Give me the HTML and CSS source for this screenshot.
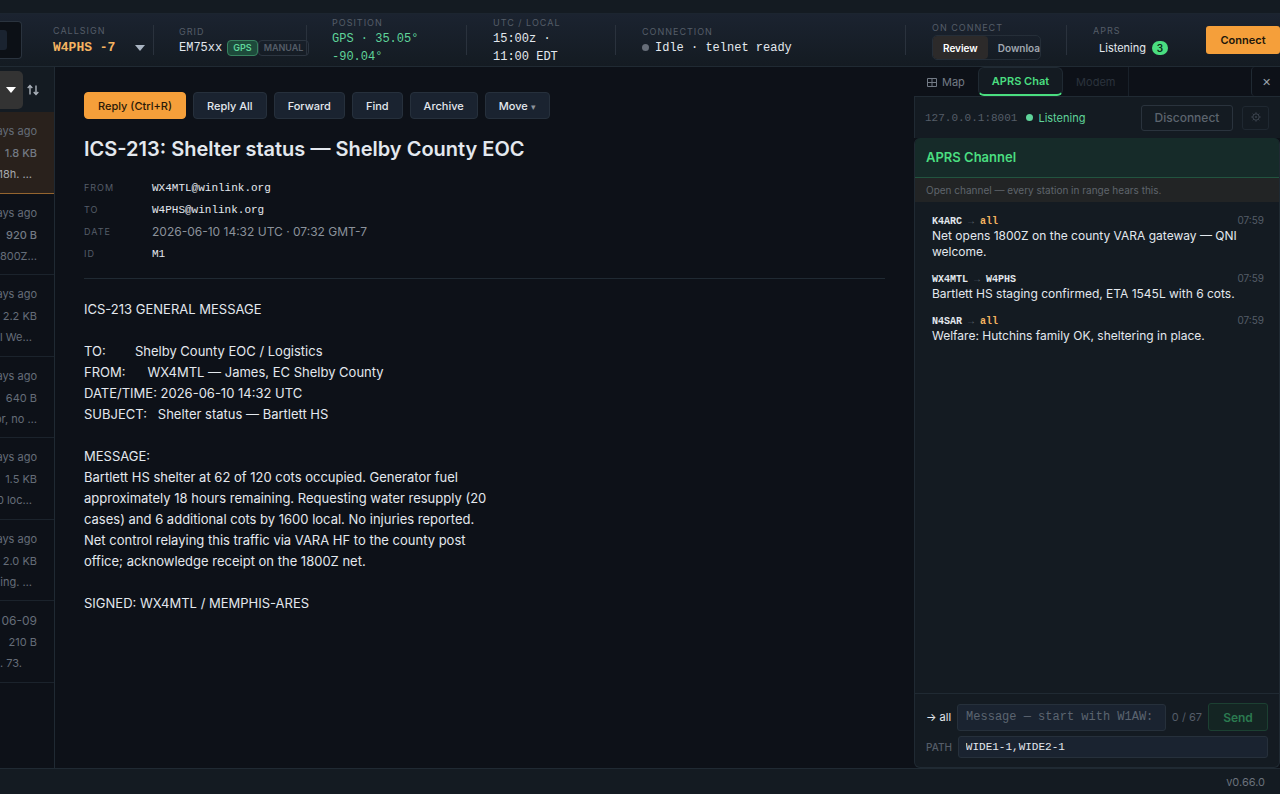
FILE: index.html
```html
<!DOCTYPE html>
<html lang="en">
<head>
    <meta charset="UTF-8">
    <meta name="viewport" content="width=device-width, initial-scale=1.0">
    <title>Winlink Mail</title>
    <link rel="stylesheet" href="styles.css">
</head>
<body>
    <div class="titlebar"></div>

    <!-- Ribbon -->
    <header class="ribbon">
        <div class="search-stub"><span class="search-key"></span></div>
        <div class="cell cell-call">
            <span class="label">CALLSIGN</span>
            <button class="callsign" type="button">W4PHS -7 <span class="caret"></span></button>
        </div>
        <div class="cell cell-grid">
            <span class="label">GRID</span>
            <div class="value grid-value">EM75xx
                <span class="source">
                    <button class="pill pill-on" type="button">GPS</button><button class="pill" type="button">MANUAL</button>
                </span>
            </div>
        </div>
        <div class="cell cell-pos">
            <span class="label">POSITION</span>
            <span class="value green">GPS · 35.05°<br>-90.04°</span>
        </div>
        <div class="cell cell-time">
            <span class="label">UTC / LOCAL</span>
            <span class="value">15:00z ·<br>11:00 EDT</span>
        </div>
        <div class="cell cell-conn">
            <span class="label">CONNECTION</span>
            <span class="value status"><span class="dot dot-idle"></span>Idle · telnet ready</span>
        </div>
        <div class="cell cell-onconnect">
            <span class="label">ON CONNECT</span>
            <div class="segment">
                <button class="seg seg-on" type="button">Review</button>
                <button class="seg" type="button">Download</button>
            </div>
        </div>
        <div class="cell cell-aprs">
            <span class="label">APRS</span>
            <span class="aprs-state">Listening <span class="badge">3</span></span>
        </div>
        <button class="connect" type="button">Connect</button>
    </header>

    <main class="workspace">
        <!-- Message list -->
        <aside class="list">
            <div class="list-tools">
                <button class="filter" type="button" aria-label="Filter"><span class="caret caret-light"></span></button>
                <button class="sort" type="button" aria-label="Sort">
                    <svg width="12" height="12" viewBox="0 0 12 12" fill="none" stroke="currentColor" stroke-width="1.4">
                        <path d="M3 10.5V1.5M.7 4 3 1.5 5.3 4M9 1.5v9M6.7 8 9 10.5 11.3 8"/>
                    </svg>
                </button>
            </div>
            <article class="row row-selected">
                <span class="age">days ago</span>
                <span class="size unread">1.8 KB</span>
                <span class="preview">18h. …</span>
            </article>
            <article class="row">
                <span class="age">days ago</span>
                <span class="size unread">920 B</span>
                <span class="preview preview-full">800Z…</span>
            </article>
            <article class="row">
                <span class="age">days ago</span>
                <span class="size">2.2 KB</span>
                <span class="preview">l We…</span>
            </article>
            <article class="row">
                <span class="age">days ago</span>
                <span class="size">640 B</span>
                <span class="preview preview-full">or, no …</span>
            </article>
            <article class="row">
                <span class="age">days ago</span>
                <span class="size">1.5 KB</span>
                <span class="preview">0 loc…</span>
            </article>
            <article class="row">
                <span class="age">days ago</span>
                <span class="size">2.0 KB</span>
                <span class="preview">ing. …</span>
            </article>
            <article class="row">
                <span class="age age-date">06-09</span>
                <span class="size">210 B</span>
                <span class="preview preview-short">. 73.</span>
            </article>
        </aside>

        <!-- Reading pane -->
        <section class="reader">
            <div class="actions">
                <button class="action action-main" type="button">Reply (Ctrl+R)</button>
                <button class="action" type="button">Reply All</button>
                <button class="action" type="button">Forward</button>
                <button class="action" type="button">Find</button>
                <button class="action" type="button">Archive</button>
                <button class="action" type="button">Move <span class="tiny">▾</span></button>
            </div>
            <h1>ICS-213: Shelter status — Shelby County EOC</h1>
            <dl class="meta">
                <dt>FROM</dt><dd>WX4MTL@winlink.org</dd>
                <dt>TO</dt><dd>W4PHS@winlink.org</dd>
                <dt>DATE</dt><dd class="date">2026-06-10 14:32 UTC · 07:32 GMT-7</dd>
                <dt>ID</dt><dd>M1</dd>
            </dl>
            <div class="message">ICS-213 GENERAL MESSAGE

TO:        Shelby County EOC / Logistics
FROM:      WX4MTL — James, EC Shelby County
DATE/TIME: 2026-06-10 14:32 UTC
SUBJECT:   Shelter status — Bartlett HS

MESSAGE:
Bartlett HS shelter at 62 of 120 cots occupied. Generator fuel
approximately 18 hours remaining. Requesting water resupply (20
cases) and 6 additional cots by 1600 local. No injuries reported.
Net control relaying this traffic via VARA HF to the county post
office; acknowledge receipt on the 1800Z net.

SIGNED: WX4MTL / MEMPHIS-ARES</div>
        </section>

        <!-- APRS dock -->
        <aside class="dock">
            <nav class="tabs">
                <button class="tab" type="button">
                    <svg width="10" height="10" viewBox="0 0 10 10" fill="none" stroke="currentColor">
                        <path d="M.5 1.5h9v8h-9zM5 1.5v8M.5 5.5h9"/>
                    </svg>
                    Map
                </button>
                <button class="tab tab-on" type="button">APRS Chat</button>
                <button class="tab tab-off" type="button">Modem</button>
                <button class="close" type="button" aria-label="Close">✕</button>
            </nav>
            <div class="link-bar">
                <span class="host">127.0.0.1:8001</span>
                <span class="link-state"><span class="dot dot-live"></span>Listening</span>
                <button class="disconnect" type="button">Disconnect</button>
                <button class="gear" type="button" aria-label="Settings">
                    <svg width="10" height="10" viewBox="0 0 10 10" fill="none" stroke="currentColor">
                        <circle cx="5" cy="5" r="3.2"/>
                        <circle cx="5" cy="5" r=".6"/>
                        <path d="M5 .3v1.5M5 8.2v1.5M.3 5h1.5M8.2 5h1.5M1.7 1.7l1 1M7.3 7.3l1 1M8.3 1.7l-1 1M2.7 7.3l-1 1"/>
                    </svg>
                </button>
            </div>
            <div class="chat">
                <h2>APRS Channel</h2>
                <p class="notice">Open channel — every station in range hears this.</p>
                <div class="feed">
                    <div class="post">
                        <div class="post-head"><b>K4ARC</b> <i>→</i> <b class="all">all</b><time>07:59</time></div>
                        <p>Net opens 1800Z on the county VARA gateway — QNI welcome.</p>
                    </div>
                    <div class="post">
                        <div class="post-head"><b>WX4MTL</b> <i>→</i> <b>W4PHS</b><time>07:59</time></div>
                        <p>Bartlett HS staging confirmed, ETA 1545L with 6 cots.</p>
                    </div>
                    <div class="post">
                        <div class="post-head"><b>N4SAR</b> <i>→</i> <b class="all">all</b><time>07:59</time></div>
                        <p>Welfare: Hutchins family OK, sheltering in place.</p>
                    </div>
                </div>
                <form class="composer">
                    <div class="compose-row">
                        <label for="msg">→ all</label>
                        <input id="msg" class="field field-msg" type="text" placeholder="Message — start with W1AW:">
                        <span class="count">0 / 67</span>
                        <button class="send" type="button">Send</button>
                    </div>
                    <div class="compose-row">
                        <label for="path" class="path-label">PATH</label>
                        <input id="path" class="field" type="text" value="WIDE1-1,WIDE2-1">
                    </div>
                </form>
            </div>
        </aside>
    </main>

    <footer class="statusbar">v0.66.0</footer>
</body>
</html>
```
FILE: styles.css
```css
/* Reset */
* {
    margin: 0;
    padding: 0;
    box-sizing: border-box;
}

/* Variables */
:root {
    --bg: #0d1118;
    --panel: #141b22;
    --raised: #1a2330;
    --line: #202a33;
    --text: #e3e8ee;
    --dim: #8b929b;
    --faint: #555d68;
    --amber: #f59f3a;
    --green: #4ade80;
    --mint: #5fd49a;
    --mono: "Liberation Mono", monospace;
}

/* Global */
html, body {
    height: 100%;
}

body {
    display: flex;
    flex-direction: column;
    overflow: hidden;
    font-family: Inter, sans-serif;
    font-size: 12px;
    color: var(--text);
    background-color: var(--bg);
}

button, input {
    font: inherit;
    color: inherit;
    background: none;
    border: none;
}

.titlebar {
    flex: none;
    height: 13px;
    background-color: var(--panel);
}

/* Ribbon */
.ribbon {
    flex: none;
    display: flex;
    align-items: center;
    height: 54px;
    background: linear-gradient(#1b2330, #141b22);
    border-top: 1px solid #1c2530;
    border-bottom: 1px solid var(--line);
}

.search-stub {
    flex: none;
    display: flex;
    align-items: center;
    width: 22px;
    height: 38px;
    background-color: #0c1016;
    border: 1px solid #2a333e;
    border-left: none;
    border-radius: 0 4px 4px 0;
}

.search-key {
    width: 7px;
    height: 20px;
    background-color: var(--raised);
    border-radius: 0 3px 3px 0;
}

.cell {
    flex: none;
    position: relative;
    display: flex;
    flex-direction: column;
    justify-content: center;
    padding-left: 26px;
}

.cell::after {
    content: '';
    position: absolute;
    right: 0;
    top: 50%;
    width: 1px;
    height: 30px;
    margin-top: -15px;
    background-color: #2a323d;
}

.cell-call { width: 132px; padding-left: 31px; }
.cell-grid { width: 153px; padding-left: 25px; }
.cell-pos { width: 160px; padding-left: 25px; }
.cell-time { width: 149px; }
.cell-conn { flex: 1; }
.cell-onconnect { width: 161px; }
.cell-aprs { width: 139px; }
.cell-aprs::after { display: none; }

.label {
    font-size: 9px;
    line-height: 15px;
    letter-spacing: 1px;
    color: var(--faint);
}

.value {
    font-family: var(--mono);
    font-size: 12px;
    line-height: 18px;
    white-space: nowrap;
}

.green {
    color: var(--mint);
}

.callsign {
    display: flex;
    align-items: center;
    justify-content: space-between;
    margin-right: 9px;
    font-family: var(--mono);
    font-size: 13px;
    font-weight: bold;
    line-height: 20px;
    color: #f5b461;
}

.caret {
    border: 5px solid transparent;
    border-top: 6px solid #a9b4c2;
    border-bottom: none;
}

.grid-value {
    display: flex;
    align-items: center;
    gap: 5px;
}

.source {
    display: flex;
    font-family: Inter, sans-serif;
}

.pill {
    height: 16px;
    padding: 0 5px;
    font-size: 9px;
    font-weight: 600;
    line-height: 12px;
    color: var(--faint);
    border: 1px solid #2c3540;
    border-radius: 4px;
}

.pill-on {
    color: var(--mint);
    background-color: #1d4a3b;
    border-color: #37825f;
}

.status, .aprs-state, .link-state {
    display: flex;
    align-items: center;
    gap: 6px;
}

.dot {
    width: 7px;
    height: 7px;
    border-radius: 50%;
}

.dot-idle { background-color: #666d78; }
.dot-live { background-color: var(--mint); }

.segment {
    display: flex;
    width: 109px;
    height: 25px;
    overflow: hidden;
    border: 1px solid #252e38;
    border-radius: 5px;
}

.seg {
    flex: none;
    padding: 0 10px;
    font-size: 10px;
    font-weight: 600;
    color: #a0a7b0;
}

.seg-on {
    color: #fff;
    background-color: #2c2a2a;
    border-radius: 4px;
}

.aprs-state {
    padding-left: 6px;
    font-size: 11px;
    line-height: 20px;
}

.badge {
    width: 16px;
    height: 14px;
    font-size: 10px;
    font-weight: 600;
    line-height: 14px;
    text-align: center;
    color: #0c2a18;
    background-color: var(--green);
    border-radius: 7px;
}

.connect {
    flex: none;
    width: 74px;
    height: 28px;
    font-size: 11px;
    font-weight: 600;
    color: #21160a;
    background-color: var(--amber);
    border-radius: 3px;
}

/* Workspace */
.workspace {
    flex: 1;
    display: flex;
    min-height: 0;
}

/* Message list */
.list {
    flex: none;
    width: 55px;
    overflow: hidden;
    border-right: 1px solid var(--line);
}

.list-tools {
    display: flex;
    align-items: center;
    gap: 4px;
    height: 45px;
    background-color: var(--panel);
}

.filter {
    display: flex;
    align-items: center;
    width: 23px;
    height: 38px;
    padding-left: 6px;
    background-color: #333;
    border-radius: 0 5px 5px 0;
}

.caret-light { border-top-color: #fff; }

.sort {
    height: 12px;
    color: #aab1ba;
}

.row {
    display: flex;
    flex-direction: column;
    align-items: flex-end;
    height: 82px;
    padding: 9px 17px 0 0;
    font-size: 11px;
    line-height: 22px;
    white-space: nowrap;
    color: #656d78;
    border-bottom: 1px solid #1b232c;
}

.row:nth-of-type(even) { height: 81px; }

.row-selected {
    background-color: #29211c;
    border-bottom-color: #94652f;
}

.age { line-height: 21px; }
.age-date { font-size: 12px; }
.unread { font-weight: 500; color: #737a84; }
.preview { padding-right: 5px; line-height: 21px; }
.row-selected .preview { color: #a5a9ae; }
.preview-full { padding-right: 0; }
.preview-short { padding-right: 15px; }

/* Reader */
.reader {
    flex: 1;
    min-width: 0;
    padding: 25px 29px;
}

.actions {
    display: flex;
    gap: 7px;
}

.action {
    height: 27px;
    padding: 0 13px;
    font-size: 11px;
    font-weight: 500;
    background-color: var(--raised);
    border: 1px solid #26303c;
    border-radius: 4px;
}

.action-main {
    color: #2a1a08;
    background-color: var(--amber);
    border-color: var(--amber);
}

.tiny {
    font-size: 9px;
    color: var(--dim);
}

h1 {
    margin-top: 16px;
    font-size: 20px;
    font-weight: 600;
    line-height: 28px;
    white-space: nowrap;
}

.meta {
    display: grid;
    grid-template-columns: 68px 1fr;
    margin-top: 14px;
    padding-bottom: 13px;
    line-height: 22px;
    border-bottom: 1px solid var(--line);
}

.meta dt {
    font-size: 9px;
    letter-spacing: 1px;
    color: var(--faint);
}

.meta dd {
    font-family: var(--mono);
    font-size: 11px;
}

.meta .date {
    font-family: Inter, sans-serif;
    font-size: 12px;
    color: var(--dim);
}

.message {
    margin-top: 20px;
    font-size: 13px;
    line-height: 21px;
    white-space: pre-wrap;
}

/* Dock */
.dock {
    flex: none;
    display: flex;
    flex-direction: column;
    width: 366px;
}

.tabs {
    flex: none;
    display: flex;
    height: 30px;
    border-bottom: 1px solid var(--line);
}

.tab {
    display: flex;
    align-items: center;
    gap: 5px;
    padding: 0 13px;
    font-size: 11px;
    color: #737b86;
}

.tab-on {
    font-weight: 600;
    color: var(--green);
    background-color: var(--panel);
    border: 1px solid var(--line);
    border-bottom: 2px solid var(--green);
    border-radius: 6px;
}

.tab-off {
    color: #2b333d;
    border-right: 1px solid #19212a;
}

.close {
    width: 29px;
    margin-left: auto;
    font-size: 11px;
    color: #9aa1aa;
    border-left: 1px solid var(--line);
    border-radius: 4px 0 0 4px;
}

.link-bar {
    flex: none;
    display: flex;
    align-items: center;
    gap: 9px;
    height: 41px;
    padding: 0 11px 0 10px;
    background-color: var(--panel);
    border-left: 1px solid var(--line);
}

.host {
    font-family: var(--mono);
    font-size: 11px;
    color: var(--faint);
}

.link-state {
    gap: 5px;
    font-size: 11px;
    color: var(--mint);
}

.disconnect {
    width: 92px;
    height: 26px;
    margin-left: auto;
    font-weight: 500;
    color: #5c646e;
    border: 1px solid #2a333d;
    border-radius: 3px;
}

.gear {
    width: 27px;
    height: 24px;
    color: #3d4550;
    border: 1px solid #1f2831;
    border-radius: 3px;
}

.chat {
    flex: 1;
    display: flex;
    flex-direction: column;
    min-height: 0;
    overflow: hidden;
    background-color: var(--panel);
    border: 1px solid var(--line);
    border-top: none;
    border-radius: 6px;
}

h2 {
    padding: 0 11px;
    font-size: 13px;
    font-weight: 600;
    line-height: 39px;
    color: var(--green);
    background-color: #162b29;
    border-bottom: 1px solid #22543f;
}

.notice {
    padding: 0 11px;
    font-size: 10px;
    line-height: 24px;
    color: #5f656c;
    background-color: #222425;
}

.feed {
    flex: 1;
    padding: 10px 15px 0 17px;
}

.post {
    margin-bottom: 10px;
}

.post-head {
    display: flex;
    align-items: baseline;
    gap: 6px;
    height: 16px;
    font-family: var(--mono);
    font-size: 10px;
    line-height: 16px;
}

.post-head i {
    font-style: normal;
    color: var(--faint);
}

.post-head .all { color: #f5b461; }

.post-head time {
    margin-left: auto;
    font-family: Inter, sans-serif;
    color: var(--faint);
}

.post p {
    line-height: 16px;
}

.composer {
    display: flex;
    flex-direction: column;
    gap: 5px;
    padding: 9px 11px;
    border-top: 1px solid var(--line);
}

.compose-row {
    display: flex;
    align-items: center;
    gap: 6px;
    font-size: 11px;
}

.path-label {
    font-size: 10px;
    font-weight: 500;
    color: var(--faint);
}

.field {
    flex: 1;
    min-width: 0;
    height: 22px;
    padding: 0 7px;
    font-family: var(--mono);
    font-size: 11px;
    background-color: var(--raised);
    border: 1px solid #26303b;
    border-radius: 3px;
}

.field-msg {
    height: 27px;
    padding: 0 8px;
    font-size: 12px;
}

.field::placeholder {
    color: #5c6570;
}

.count {
    color: var(--faint);
}

.send {
    width: 60px;
    height: 28px;
    font-size: 12px;
    font-weight: 600;
    color: #2b7a50;
    background-color: #142523;
    border: 1px solid #1c4032;
    border-radius: 3px;
}

/* Status bar */
.statusbar {
    flex: none;
    height: 26px;
    padding-right: 15px;
    font-size: 11px;
    line-height: 26px;
    text-align: right;
    color: #6a717b;
    background-color: var(--panel);
    border-top: 1px solid var(--line);
}
```
